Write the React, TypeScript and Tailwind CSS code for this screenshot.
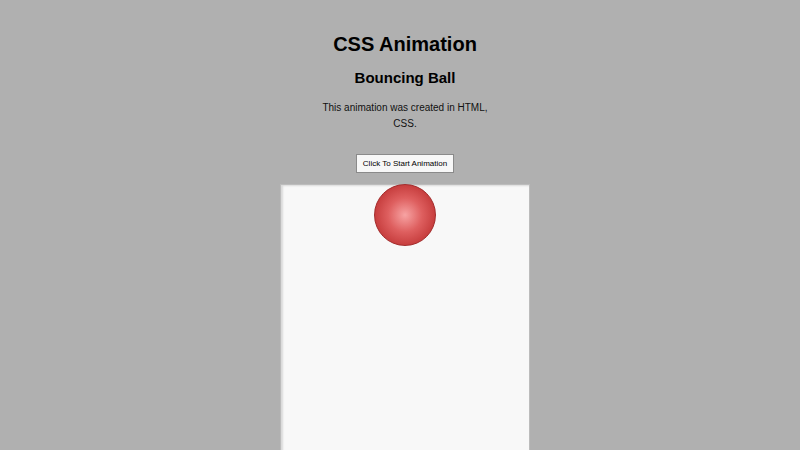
export default function App() {
  return (
    <div className="h-[450px] bg-[#b0b0b0] pl-[10px] font-['Liberation_Sans',Arial,sans-serif] text-black overflow-hidden">
      <div className="flex flex-col items-center pt-[32px]">
        <h1 className="text-[20px] font-bold leading-[24px]">CSS Animation</h1>
        <h3 className="mt-[13px] text-[15px] font-bold leading-[18px]">Bouncing Ball</h3>
        <p className="mt-[13px] w-[172px] text-center text-[10px] leading-[16px] text-[#111]">
          This animation was created in HTML, CSS.
        </p>
        <button className="mt-[22px] h-[19px] w-[98px] border border-[#8a8a8a] bg-[#f7f7f7] text-[8px] leading-[17px] text-black">
          Click To Start Animation
        </button>
        <div className="relative mt-[11px] h-[300px] w-[250px] border border-[#bcbcbc] bg-[#f8f8f8] shadow-[inset_2px_1px_2px_rgba(0,0,0,0.12)]">
          <div className="absolute left-1/2 top-[-1px] h-[62px] w-[62px] -translate-x-1/2 rounded-full border border-[#a32c2c] bg-[radial-gradient(circle_at_50%_50%,#f7a3a3_0%,#de5f5f_40%,#c43a3a_75%,#ad2a2a_100%)]" />
        </div>
      </div>
    </div>
  );
}
